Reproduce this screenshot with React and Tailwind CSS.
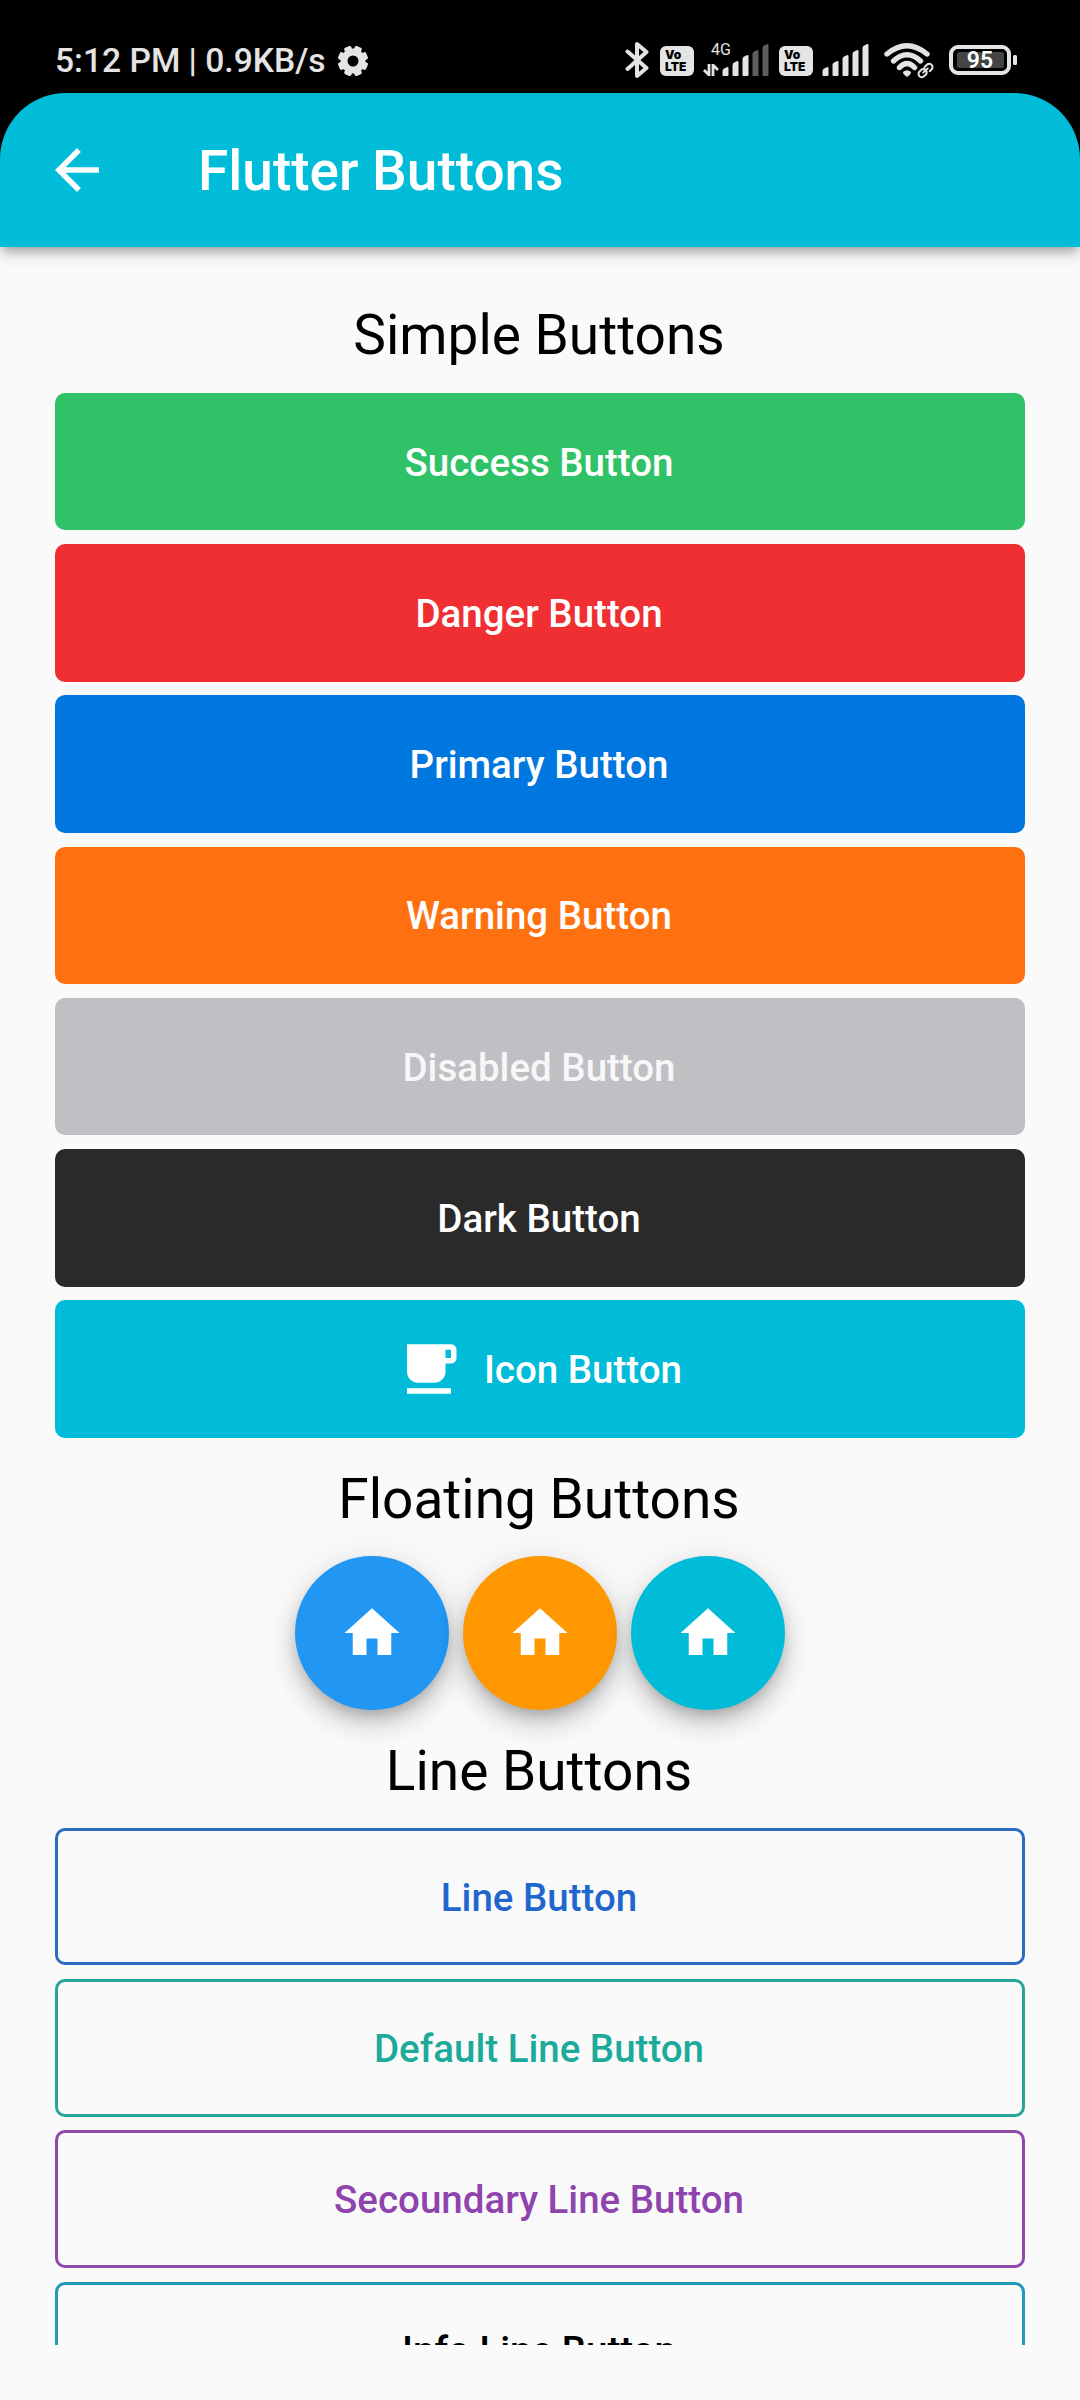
const simpleButtons = [
  { label: "Success Button", style: "bg-[#2fc266] text-white" },
  { label: "Danger Button", style: "bg-[#ef2f32] text-white" },
  { label: "Primary Button", style: "bg-[#0076df] text-white" },
  { label: "Warning Button", style: "bg-[#ff7110] text-white" },
  { label: "Disabled Button", style: "bg-[#c0bfc4] text-[#f7f7f8]" },
  { label: "Dark Button", style: "bg-[#2a2a2a] text-white" },
  { label: "Icon Button", style: "bg-[#00bcd9] text-white", icon: true },
];

const lineButtons = [
  { label: "Line Button", style: "border-[#2b6cc0] text-[#1f67cd]" },
  { label: "Default Line Button", style: "border-[#26a597] text-[#1cab9b]" },
  { label: "Secoundary Line Button", style: "border-[#9148a8] text-[#8f44ad]" },
  { label: "Info Line Button", style: "border-[#2299b9] text-black" },
];

const floatingButtons = ["bg-[#2196f3]", "bg-[#ff9800]", "bg-[#00bcd9]"];

function MaterialIcon({ d, className }) {
  return (
    <svg viewBox="0 0 24 24" fill="currentColor" className={className}>
      <path d={d} />
    </svg>
  );
}

const ARROW = "M20 11H7.83l5.59-5.59L12 4l-8 8 8 8 1.41-1.41L7.83 13H20v-2z";
const HOME = "M10 20v-6h4v6h5v-8h3L12 3 2 12h3v8z";
const CUP =
  "M20 3H4v10c0 2.21 1.79 4 4 4h6c2.21 0 4-1.79 4-4v-3h2c1.11 0 2-.9 2-2V5c0-1.11-.89-2-2-2zm0 5h-2V5h2v3zM4 19h16v2H4z";

function Gear() {
  return (
    <svg viewBox="-16 -16 32 32" className="ml-[11px] size-8">
      <circle r="9" fill="none" stroke="#e4e4e4" strokeWidth="7" />
      {[0, 45, 90, 135, 180, 225, 270, 315].map((a) => (
        <rect key={a} x="-3.8" y="-15.2" width="7.6" height="6" rx="1.6" fill="#e4e4e4" transform={`rotate(${a + 22.5})`} />
      ))}
    </svg>
  );
}

function Volte({ className }) {
  return (
    <div className={`flex h-[30px] w-[34px] flex-col justify-center rounded-[6px] bg-[#e4e4e4] pl-[5px] font-['Inter',sans-serif] text-black ${className}`}>
      <span className="text-[12px] leading-[11px] font-black">Vo</span>
      <span className="text-[12px] leading-[13px] font-black">LTE</span>
    </div>
  );
}

function SignalBars({ active, className }) {
  return (
    <svg viewBox="0 0 48 32" className={className}>
      {[8, 14, 20, 25, 31].map((h, i) => (
        <path
          key={h}
          d={`M${i * 10 + 0.5} ${31}V${31 - h + 4}q0-1.5 1.2-2.2l3-1.6q1.8-.8 1.8 1V31q0 1-1 1h-4q-1 0-1-1z`}
          fill={i < active ? "#e4e4e4" : "#5e5e5e"}
        />
      ))}
    </svg>
  );
}

function StatusBar() {
  return (
    <div className="flex h-[93px] items-start bg-black pr-[63px] pl-[55px] text-[#e4e4e4]">
      <div className="flex h-[62px] grow items-center pt-[60px]">
        <span className="text-[33.6px] font-medium whitespace-pre">5:12 PM | 0.9KB/s</span>
        <Gear />
      </div>
      <svg viewBox="0 0 24 38" className="mt-[41px] h-[38px] w-6 shrink-0" fill="none" stroke="#e4e4e4" strokeWidth="4" strokeLinejoin="round" strokeLinecap="round">
        <path d="M2.500 10.500L21.500 27L12 35V3L21.500 11L2.500 28" />
      </svg>
      <Volte className="mt-[46px] ml-[11px] shrink-0" />
      <div className="relative mt-[44px] ml-[9px] flex h-8 w-[67px] shrink-0">
        <span className="absolute -top-[4px] left-[8px] text-[16px] leading-5">4G</span>
        <svg viewBox="0 0 16 12" className="mt-[20px] h-3 w-4 shrink-0" fill="none" stroke="#e4e4e4" strokeWidth="2.8">
          <path d="M6 0V11L1 6M10 12V1L15 6" />
        </svg>
        <SignalBars active={3} className="ml-[3px] h-8 w-12 shrink-0" />
      </div>
      <Volte className="mt-[46px] ml-[9px] shrink-0" />
      <SignalBars active={5} className="mt-[44px] ml-[9px] h-8 w-12 shrink-0" />
      <svg viewBox="0 0 50 36" className="mt-[43px] ml-[14px] h-9 w-[50px] shrink-0 overflow-visible" fill="none" stroke="#e4e4e4" strokeLinecap="round">
        <path d="M3 11Q23 -5.500 43 11" strokeWidth="5.400" />
        <path d="M9.500 18Q23 5.500 36.500 18" strokeWidth="5.400" />
        <path d="M15.500 24.500Q23 16.500 30.500 24.500" strokeWidth="5.400" />
        <path d="M19 29q4-3.500 8 0q.5 2-4 5q-4.500-3-4-5z" fill="#e4e4e4" stroke="none" />
        <g transform="rotate(-42 41.500 27.500)">
          <rect x="32.500" y="23.500" width="18" height="8" rx="4" fill="#000" stroke="#000" strokeWidth="5" />
          <path d="M41.500 29.300a3.200 3.200 0 0 1-2.700 1.500H36.500a3.300 3.300 0 0 1 0-6.600H38.800a3.200 3.200 0 0 1 2.200 1M41.500 25.700a3.200 3.200 0 0 1 2.700-1.500H46.500a3.300 3.300 0 0 1 0 6.600H44.200M38.500 27.500H44.500" strokeWidth="2" />
        </g>
      </svg>
      <div className="mt-[45px] ml-[15px] flex h-[30px] shrink-0 items-center gap-[2px]">
        <div className="flex h-[30px] w-[62px] items-center justify-center rounded-[9px] border-4 border-[#e4e4e4]">
          <div className="flex h-[16px] w-[47px] items-center justify-center rounded-[2px] bg-[#444]">
            <span className="pt-px text-[23px] leading-none font-semibold text-white">95</span>
          </div>
        </div>
        <div className="h-[10px] w-1 rounded-[1.500px] bg-[#e4e4e4]" />
      </div>
    </div>
  );
}

function Heading({ children }) {
  return <h2 className="pr-[2px] text-center text-[55px] leading-[64px] text-black">{children}</h2>;
}

const buttonBase =
  "flex h-[137.5px] w-full shrink-0 items-center justify-center rounded-[10px] pt-[2px] pr-[2px] text-[38.5px] font-medium";

export default function App() {
  return (
    <div className="h-[2400px] w-[1080px] overflow-hidden bg-[#fafafa] font-['Roboto',sans-serif]">
      <StatusBar />
      <div className="relative z-10 bg-[linear-gradient(#000_50%,transparent_50%)]">
        <header className="flex h-[154px] items-center rounded-t-[66px] bg-[#00bcd9] pl-[44px] text-white shadow-[0_6px_11px_-3px_rgba(0,0,0,0.28),0_9px_14px_rgba(0,0,0,0.13)]">
          <MaterialIcon d={ARROW} className="size-[66px]" />
          <h1 className="ml-[88px] pt-[2px] text-[55px] leading-[64px] font-medium">Flutter Buttons</h1>
        </header>
      </div>
      <main className="h-[2098px] overflow-hidden px-[55px] pt-[56px]">
        <Heading>Simple Buttons</Heading>
        <div className="mt-[25.75px] flex flex-col gap-[13.75px]">
          {simpleButtons.map(({ label, style, icon }) => (
            <button key={label} className={`${buttonBase} ${style}`}>
              {icon && <MaterialIcon d={CUP} className="mr-[22px] -mt-[2px] size-[66px]" />}
              {label}
            </button>
          ))}
        </div>
        <div className="mt-[29px]">
          <Heading>Floating Buttons</Heading>
        </div>
        <div className="mt-[25px] flex justify-center gap-[13.75px]">
          {floatingButtons.map((color) => (
            <button
              key={color}
              className={`flex size-[154px] items-center justify-center rounded-full text-white shadow-[0_8px_14px_-3px_rgba(0,0,0,0.2),0_16px_27px_rgba(0,0,0,0.14),0_3px_40px_rgba(0,0,0,0.09)] ${color}`}
            >
              <MaterialIcon d={HOME} className="size-[66px]" />
            </button>
          ))}
        </div>
        <div className="mt-[29px]">
          <Heading>Line Buttons</Heading>
        </div>
        <div className="mt-[25px] flex flex-col gap-[13.75px]">
          {lineButtons.map(({ label, style }) => (
            <button key={label} className={`${buttonBase} border-3 ${style}`}>
              {label}
            </button>
          ))}
        </div>
      </main>
    </div>
  );
}
